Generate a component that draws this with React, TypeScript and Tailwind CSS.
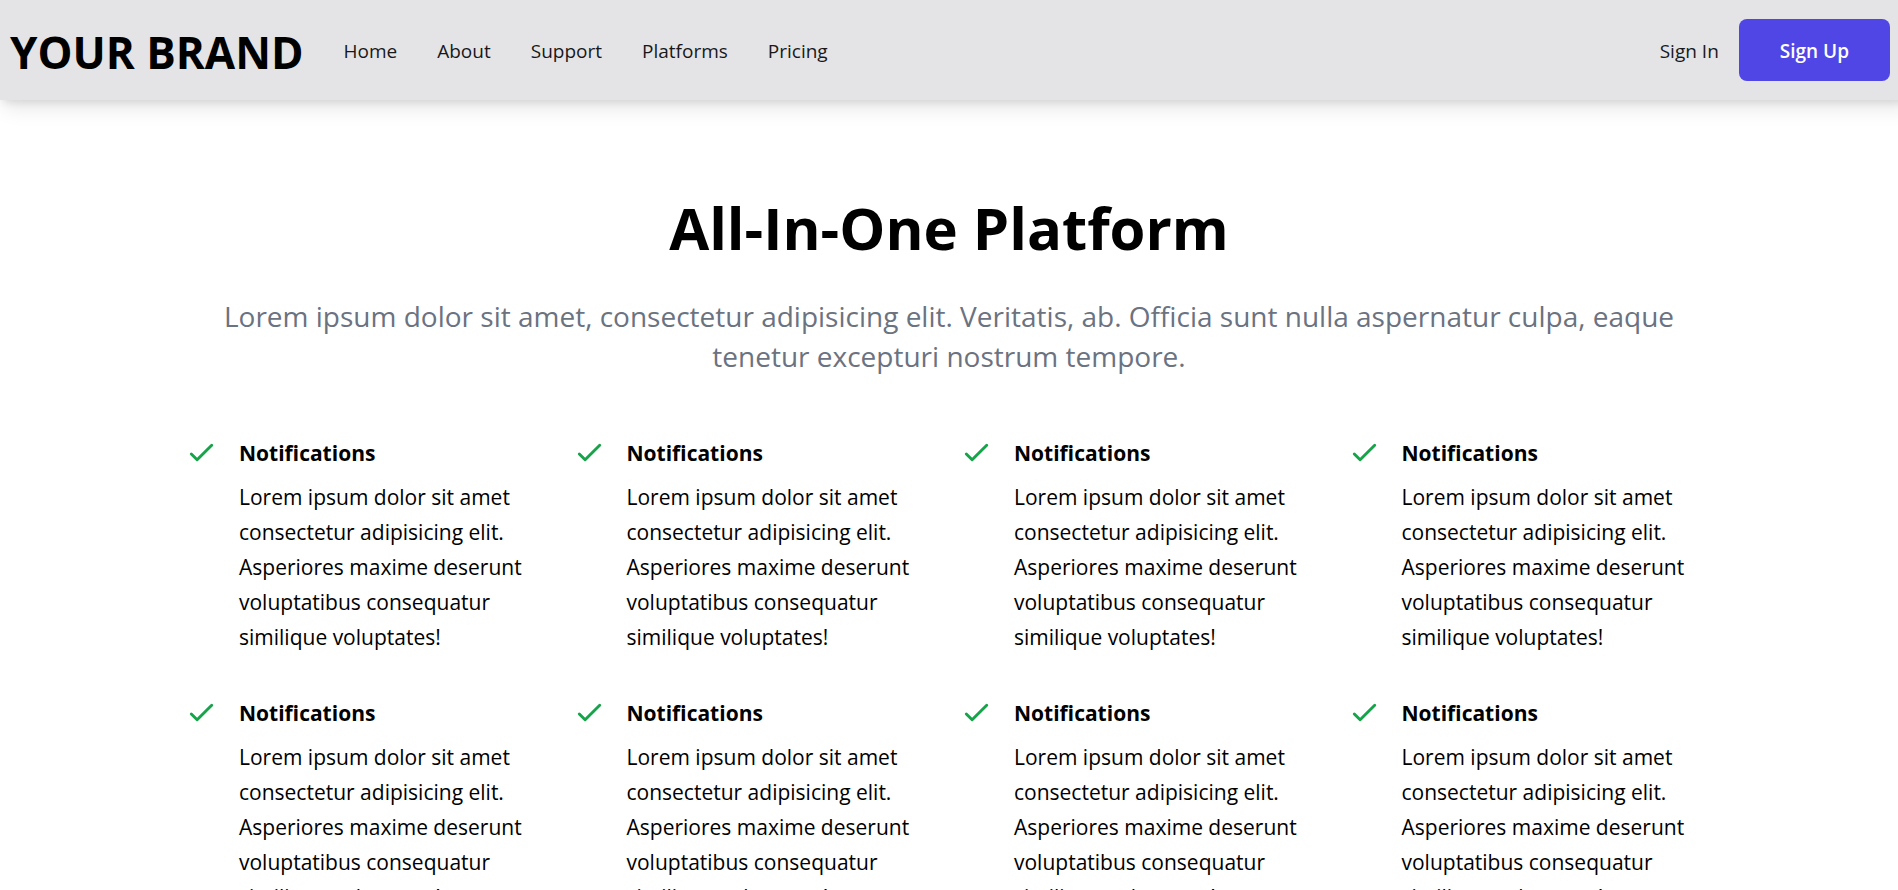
const links = ['Home', 'About', 'Support', 'Platforms', 'Pricing'];

const features = Array.from({ length: 8 }, (_, id) => ({
  id,
  title: 'Notifications',
  text: 'Lorem ipsum dolor sit amet consectetur adipisicing elit. Asperiores maxime deserunt voluptatibus consequatur similique voluptates!',
}));

function CheckIcon() {
  return (
    <svg
      className="size-[35px] shrink-0 text-[#16a34a]"
      viewBox="0 0 24 24"
      fill="none"
      stroke="currentColor"
      strokeWidth={2}
      strokeLinecap="round"
      strokeLinejoin="round"
      aria-hidden="true"
    >
      <path d="M5 13l4 4L19 7" />
    </svg>
  );
}

function Header() {
  return (
    <header className="-mr-4 flex h-[100px] items-center justify-between bg-[#e4e4e7] pr-6 pl-2.5 shadow-[0_12px_19px_-4px_rgba(0,0,0,0.1),0_5px_8px_-3px_rgba(0,0,0,0.1)]">
      <div className="flex items-center gap-10">
        <h1 className="pt-1 text-[44px] leading-[50px] font-bold text-black">YOUR BRAND</h1>
        <nav>
          <ul className="flex gap-10 pt-0.5 text-[19px] leading-[30px] text-[#18181b]">
            {links.map((link) => (
              <li key={link}>
                <a href="#">{link}</a>
              </li>
            ))}
          </ul>
        </nav>
      </div>
      <div className="flex items-center gap-5 text-[19px] leading-[30px]">
        <button type="button" className="pt-0.5 text-[#18181b]">
          Sign In
        </button>
        <button type="button" className="rounded-lg bg-[#4f46e5] px-[41px] pt-[17px] pb-[15px] font-semibold text-white">
          Sign Up
        </button>
      </div>
    </header>
  );
}

export default function App() {
  return (
    <div className="h-screen overflow-hidden bg-white font-['Open_Sans',sans-serif] text-black">
      <Header />
      <main className="mx-auto max-w-[1550px] px-2.5 pt-[98px] pb-20">
        <div className="text-center">
          <h2 className="text-[58px] leading-[60px] font-bold">All-In-One Platform</h2>
          <p className="pt-[38px] text-[28px] leading-10 text-[#6b7280]">
            Lorem ipsum dolor sit amet, consectetur adipisicing elit. Veritatis, ab. Officia sunt nulla aspernatur culpa,
            eaque tenetur excepturi nostrum tempore.
          </p>
        </div>
        <div className="grid grid-cols-4 gap-x-5 gap-y-10 pt-[59px]">
          {features.map((feature) => (
            <div key={feature.id} className="flex gap-5">
              <CheckIcon />
              <div className="text-[21px] leading-[35px]">
                <h3 className="leading-9 font-bold">{feature.title}</h3>
                <p className="pt-[9px]">{feature.text}</p>
              </div>
            </div>
          ))}
        </div>
      </main>
    </div>
  );
}
